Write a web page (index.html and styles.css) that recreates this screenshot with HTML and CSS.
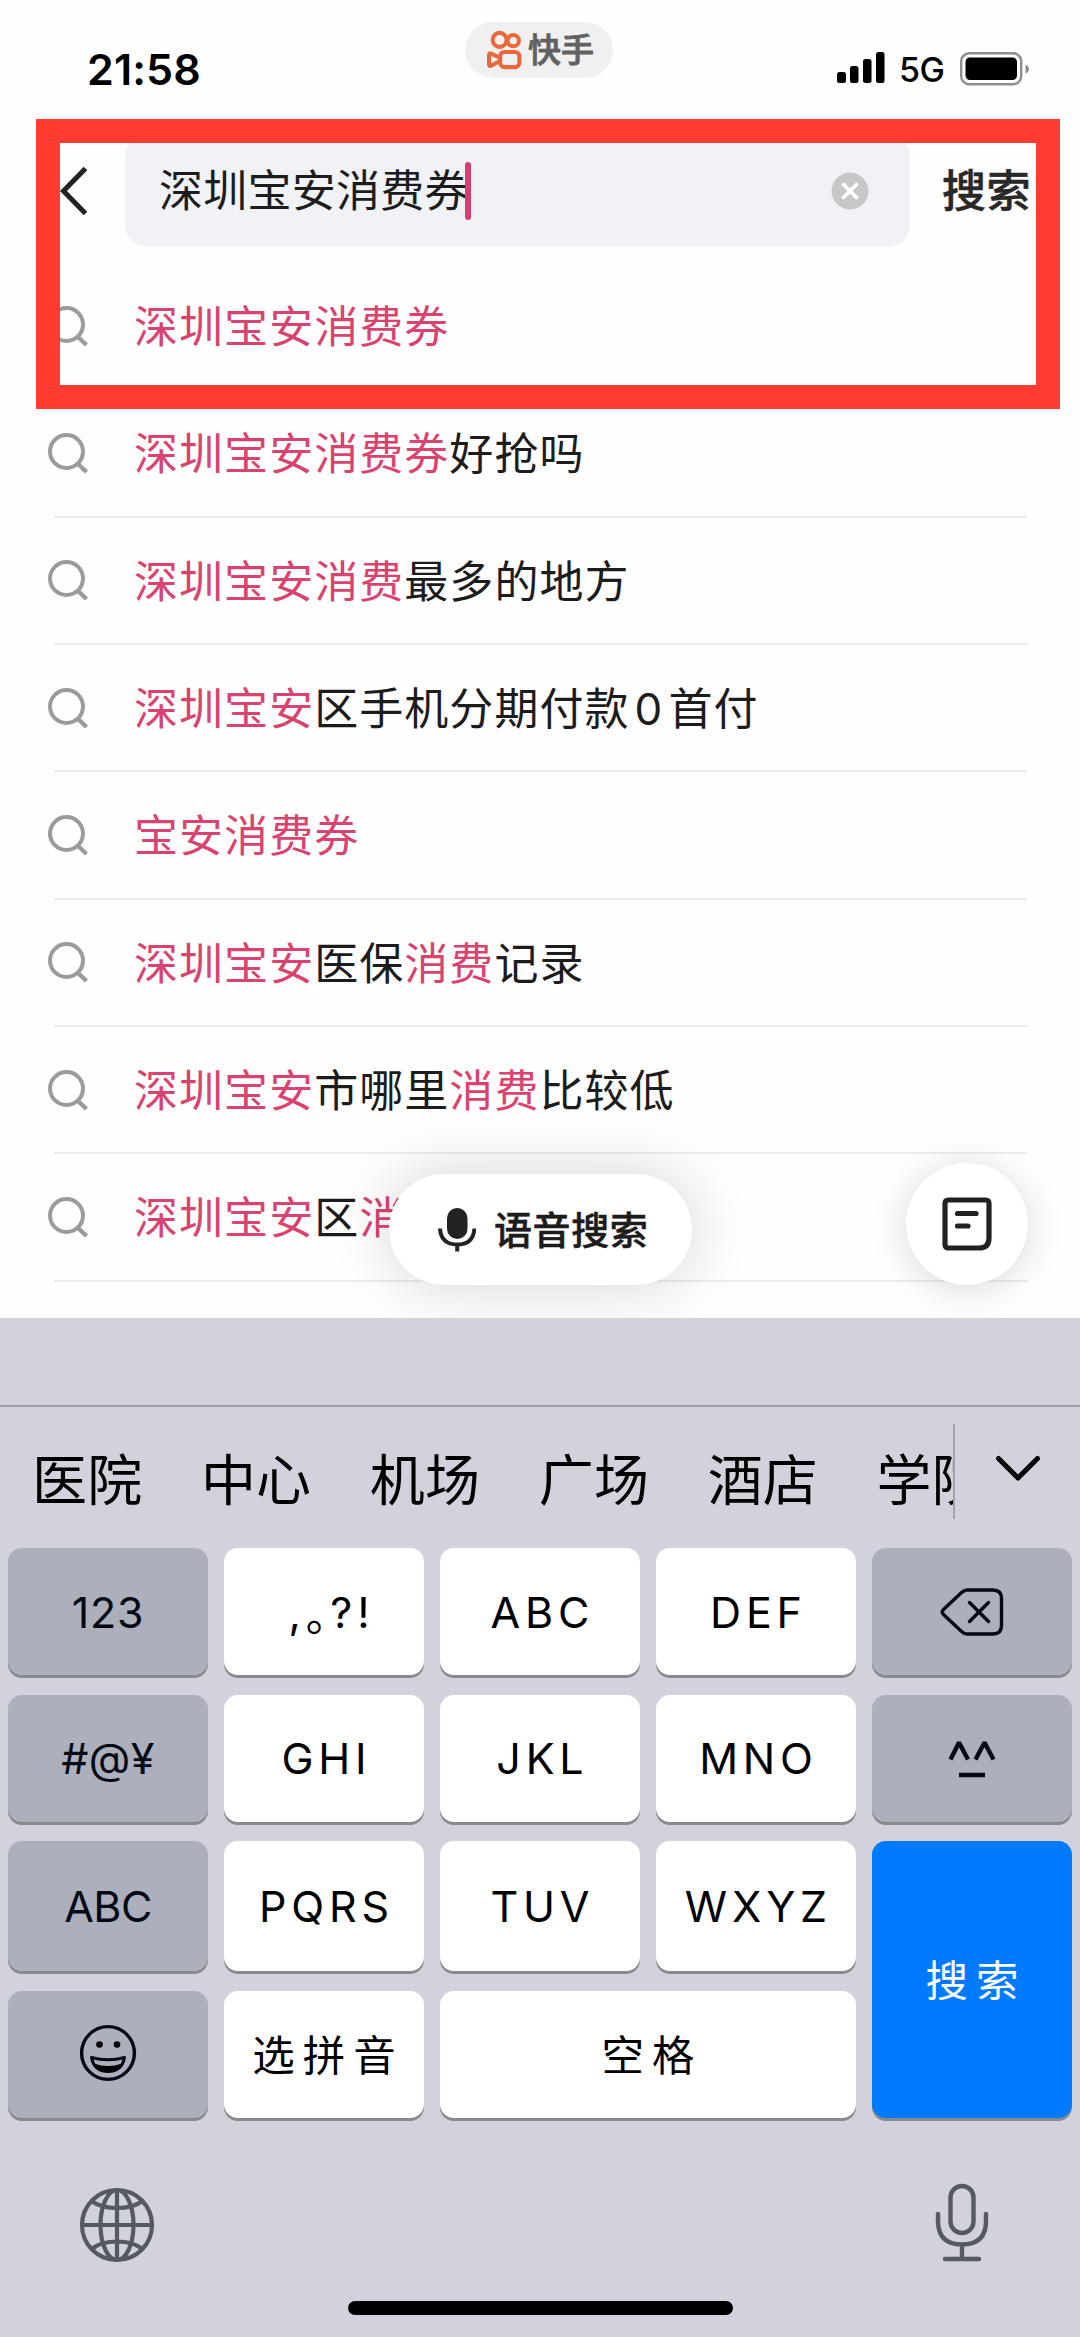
FILE: index.html
```html
<!DOCTYPE html>
<html lang="zh-CN">
<head>
<meta charset="utf-8">
<title>搜索</title>
<link rel="stylesheet" href="styles.css">
</head>
<body>
<svg class="defs" width="0" height="0" aria-hidden="true">
  <symbol id="magnifier" viewBox="0 0 44 44">
    <circle cx="20.5" cy="19.5" r="16.5" fill="none" stroke="#9b9b9b" stroke-width="4"/>
    <path d="M31.5 31.5 40.5 40" fill="none" stroke="#9b9b9b" stroke-width="4.4"/>
  </symbol>
</svg>
<div class="phone">
  <header class="status">
    <div class="time">21:58</div>
    <div class="source">
      <svg class="source-logo" viewBox="0 0 36 40" fill="none" stroke="#e8683c" stroke-width="4.2">
        <circle cx="13" cy="9.6" r="7.2"/>
        <circle cx="27" cy="10.4" r="5.8"/>
        <rect x="13.5" y="22" width="19.8" height="15.6" rx="4.6"/>
        <path d="M13 28 4.500 23.800Q2.1 22.800 2.1 25V34.6Q2.1 37 4.500 36L13 31.500" stroke-linejoin="round"/>
      </svg>
      <span>快手</span>
    </div>
    <div class="radio">
      <svg width="48" height="32" viewBox="0 0 48 32">
        <rect x="0" y="20" width="9" height="11" rx="2.5"/>
        <rect x="13" y="14" width="8.5" height="17" rx="2.5"/>
        <rect x="26" y="7" width="8.5" height="24" rx="2.5"/>
        <rect x="39" y="0" width="8.5" height="31" rx="2.5"/>
      </svg>
      <span class="network">5G</span>
      <svg width="70" height="34" viewBox="0 0 70 34">
        <rect x="1.2" y="1.2" width="60" height="31" rx="8" fill="none" stroke="#8f8f8f" stroke-width="2.4"/>
        <rect x="5.5" y="5.5" width="51.5" height="22.5" rx="4.5"/>
        <path d="M65.500 12.500Q69 14 69 17T65.500 21.500Z" fill="#8f8f8f"/>
      </svg>
    </div>
  </header>

  <div class="searchbar">
    <svg class="back" viewBox="0 0 30 52"><path d="M26.500 3.500 4.500 26 26.500 48.500" fill="none" stroke="#222" stroke-width="5"/></svg>
    <div class="field">
      <span class="query">深圳宝安消费券</span><i class="caret"></i>
      <svg class="clear" viewBox="0 0 38 38"><circle cx="19" cy="19" r="18.500" fill="#c7c7c9"/><path d="M12.500 12.500 25.500 25.500M25.500 12.500 12.500 25.500" stroke="#fff" stroke-width="3.800" stroke-linecap="round"/></svg>
    </div>
    <span class="submit">搜索</span>
  </div>

  <ul class="suggestions">
    <li><svg><use href="#magnifier"/></svg><p><b>深圳宝安消费券</b></p></li>
    <li><svg><use href="#magnifier"/></svg><p><b>深圳宝安消费券</b>好抢吗</p></li>
    <li><svg><use href="#magnifier"/></svg><p><b>深圳宝安消费</b>最多的地方</p></li>
    <li><svg><use href="#magnifier"/></svg><p><b>深圳宝安</b>区手机分期付款<span class="digit">0</span>首付</p></li>
    <li><svg><use href="#magnifier"/></svg><p><b>宝安消费券</b></p></li>
    <li><svg><use href="#magnifier"/></svg><p><b>深圳宝安</b>医保<b>消费</b>记录</p></li>
    <li><svg><use href="#magnifier"/></svg><p><b>深圳宝安</b>市哪里<b>消费</b>比较低</p></li>
    <li><svg><use href="#magnifier"/></svg><p><b>深圳宝安</b>区<b>消</b></p></li>
  </ul>

  <div class="voice">
    <svg viewBox="0 0 38 44"><rect x="9" y="0" width="20.500" height="31" rx="10.200" fill="#222"/><path d="M2 20.500Q3 36.500 19.200 36.500T36.400 20.500M19.200 36V43.500" fill="none" stroke="#222" stroke-width="4"/></svg>
    <span>语音搜索</span>
  </div>
  <div class="feedback">
    <svg viewBox="0 0 50 54"><path d="M6.500 3H43.500Q47 3 47 6.500V41Q47 51 37 51H6.500Q3 51 3 47.500V6.500Q3 3 6.500 3ZM15.500 16.500H34M15.500 29H26" fill="none" stroke="#222" stroke-width="5.200" stroke-linecap="round"/></svg>
  </div>
  <div class="highlight"></div>

  <section class="keyboard">
    <div class="toolbar"></div>
    <div class="candidates">
      <div class="words"><span>医院</span><span>中心</span><span>机场</span><span>广场</span><span>酒店</span><span>学院</span></div>
      <div class="expand"><svg viewBox="0 0 48 28"><path d="M4.500 3.500 24 23 43.500 3.500" fill="none" stroke="#000" stroke-width="5" stroke-linecap="round" stroke-linejoin="round"/></svg></div>
    </div>
    <div class="keys">
      <div class="key mod digits">123</div>
      <div class="key punct">,<span class="stop">。</span>?!</div>
      <div class="key">ABC</div>
      <div class="key">DEF</div>
      <div class="key mod">
        <svg width="64" height="48" viewBox="0 0 64 48" fill="none" stroke="#050914" stroke-width="3.400" stroke-linecap="round" stroke-linejoin="round"><path d="M27 2H53Q61.500 2 61.500 10.500V37.500Q61.500 46 53 46H27Q24 46 21 43L3.500 26.500Q1 24 3.500 21.500L21 5Q24 2 27 2ZM29.500 14.500 48.500 33.500M48.500 14.500 29.500 33.500"/></svg>
      </div>

      <div class="key mod symbols">#@¥</div>
      <div class="key">GHI</div>
      <div class="key">JKL</div>
      <div class="key">MNO</div>
      <div class="key mod">
        <svg class="face" width="48" height="40" viewBox="0 0 48 40" fill="none" stroke="#050914" stroke-width="4.400" stroke-linejoin="bevel"><path d="M2.500 20.500 11 3.500 20 20.500M27.500 20.500 36.500 3.500 45.500 20.500M11 36H37"/></svg>
      </div>

      <div class="key mod">ABC</div>
      <div class="key">PQRS</div>
      <div class="key">TUV</div>
      <div class="key">WXYZ</div>
      <div class="key go">搜索</div>

      <div class="key mod">
        <svg class="smile" width="58" height="58" viewBox="0 0 58 58"><circle cx="29" cy="29" r="26.400" fill="none" stroke="#050914" stroke-width="3.400"/><circle cx="20.500" cy="20.500" r="3.300"/><circle cx="38" cy="20.500" r="3.300"/><path d="M12.500 33.500Q29 38 45.500 33.500Q43 47.500 29 47.500T12.500 33.500Z" fill="none" stroke="#050914" stroke-width="3" stroke-linejoin="round"/><path d="M15 39.500Q29 44.500 43 39.500Q39 48 29 48T15 39.500Z"/></svg>
      </div>
      <div class="key cjk">选拼音</div>
      <div class="key cjk space">空格</div>
    </div>
    <div class="dock">
      <svg width="76" height="76" viewBox="0 0 76 76" fill="none" stroke="#555961" stroke-width="4.200"><circle cx="38" cy="38" r="35"/><ellipse cx="38" cy="38" rx="16.500" ry="35"/><path d="M38 3V73M3 38H73M12.500 14Q22 21 38 21T63.500 14M12.500 62Q22 54.500 38 54.500T63.500 62"/></svg>
      <svg class="dictate" width="54" height="80" viewBox="0 0 54 80" fill="none" stroke="#555961" stroke-width="4.400" stroke-linecap="round"><rect x="15.500" y="3" width="23" height="47" rx="11.500"/><path d="M3 31V38Q3 61.500 27 61.500T51 38V31M27 62V75M10 76H44"/></svg>
    </div>
    <div class="home"></div>
  </section>
</div>
</body>
</html>
```
FILE: styles.css
```css
* { box-sizing: border-box; }
body { margin: 0; background: #fff; }
.defs { position: absolute; }
svg { display: block; flex: none; }

.phone {
  position: relative;
  display: flex;
  flex-direction: column;
  width: 1080px;
  height: 2337px;
  overflow: hidden;
  background: #fefefe;
  color: #1c1c1c;
  font-family: Inter, "Noto Sans CJK SC", sans-serif;
}

/* status bar */
.status {
  display: grid;
  grid-template-columns: 465px 148px 1fr;
  height: 135px;
  flex: none;
  color: #000;
}
.time {
  padding: 43px 0 0 87px;
  font-size: 43px;
  line-height: 52px;
  font-weight: 600;
  letter-spacing: 0.1px;
}
.source {
  display: flex;
  align-items: center;
  gap: 6px;
  height: 56px;
  margin-top: 22px;
  padding-left: 22px;
  border-radius: 28px;
  background: #f0f0f0;
  color: #616161;
  font-size: 33px;
  line-height: 56px;
  font-weight: 500;
  -webkit-text-stroke: 0.8px currentColor;
}
.source-logo { width: 35px; height: 40px; }
.radio { display: flex; padding: 52px 0 0 224px; }
.network {
  width: 75px;
  padding-left: 14px;
  font-size: 34px;
  line-height: 36px;
  font-weight: 500;
  letter-spacing: -0.6px;
}

/* search bar */
.searchbar {
  display: flex;
  align-items: center;
  height: 112px;
  flex: none;
  padding-left: 59px;
}
.back { width: 30px; height: 52px; margin-right: 36px; }
.field {
  display: flex;
  align-items: center;
  width: 785px;
  height: 112px;
  padding: 0 41px 0 34px;
  border-radius: 22px;
  background: #f1f2f6;
}
.query { font-size: 44px; letter-spacing: 0.25px; line-height: 64px; }
.caret { width: 6px; height: 58px; margin-left: -4px; border-radius: 3px; background: #d83d70; }
.clear { width: 38px; height: 38px; margin-left: auto; }
.submit {
  margin: 0 0 0 32px;
  font-size: 44px;
  line-height: 64px;
  font-weight: 500;
  letter-spacing: 0.6px;
  color: #282828;
  -webkit-text-stroke: 0.5px currentColor;
}

/* suggestions */
.suggestions { list-style: none; margin: 0; padding: 16px 53px 0 54px; }
.suggestions li {
  display: flex;
  align-items: center;
  height: 127.33px;
  border-bottom: 2px solid #ebebeb;
}
.suggestions svg { width: 44px; height: 44px; margin: 2px 44px 0 -8px; }
.suggestions p {
  margin: 3px 0 0;
  font-size: 44px;
  line-height: 64px;
  letter-spacing: 1.05px;
  white-space: nowrap;
}
.suggestions b { font-weight: 400; color: #d8436f; }
.digit { padding: 0 5px; }

/* floating controls over the list */
.voice {
  position: absolute;
  left: 389px;
  top: 1174px;
  display: flex;
  align-items: center;
  gap: 18px;
  width: 303px;
  height: 111px;
  padding-left: 49px;
  border-radius: 56px;
  background: #fff;
  box-shadow: 0 0 60px rgba(0, 0, 0, .17);
  font-size: 38px;
  font-weight: 500;
  letter-spacing: 0.6px;
  -webkit-text-stroke: 0.5px currentColor;
}
.voice span { margin-top: -5px; }
.voice svg { width: 38px; height: 44px; }
.feedback {
  position: absolute;
  left: 906px;
  top: 1163px;
  display: grid;
  place-items: center;
  width: 122px;
  height: 122px;
  border-radius: 50%;
  background: #fff;
  box-shadow: 0 4px 36px rgba(0, 0, 0, .15);
}
.feedback svg { width: 50px; height: 54px; }
.highlight {
  position: absolute;
  left: 36px;
  top: 119px;
  width: 1024px;
  height: 290px;
  border: 24px solid #ff3b30;
}

/* keyboard */
.keyboard {
  position: relative;
  display: flex;
  flex-direction: column;
  height: 1019px;
  flex: none;
  margin-top: auto;
  background: #d1d2db;
  color: #050914;
}
.toolbar { height: 89px; border-bottom: 2px solid #9c9da5; }
.candidates { display: flex; height: 141px; }
.words {
  display: flex;
  gap: 58.5px;
  width: 955px;
  height: 95px;
  margin-top: 17px;
  padding-left: 32px;
  overflow: hidden;
  border-right: 2px solid #a3a4ab;
  color: #000;
  font-size: 55px;
  line-height: 113px;
  white-space: nowrap;
}
.words span { flex: none; letter-spacing: 0.2px; }
.expand { padding: 48px 0 0 39px; }
.expand svg { width: 48px; height: 28px; }

.keys {
  display: grid;
  grid-template-columns: repeat(5, 200px);
  grid-template-rows: 127px 127px 130px 127px;
  gap: 19.67px 16px;
  padding: 0 8px;
}
.key {
  display: flex;
  align-items: center;
  justify-content: center;
  border-radius: 14px;
  background: #fff;
  box-shadow: 0 3px 0 #88898d;
  color: #000;
  font-size: 43px;
  font-weight: 380;
  letter-spacing: 4.8px;
  text-indent: 4.8px;
}
.mod { background: #abb0bc; color: #050914; letter-spacing: -0.5px; text-indent: 0; }
.symbols { letter-spacing: 0.4px; }
.digits { letter-spacing: 0.8px; }
.cjk, .go { letter-spacing: 8px; text-indent: 8px; padding-bottom: 4px; font-size: 42.5px; }
.go { grid-row: 3 / 5; grid-column: 5; background: #007aff; color: #fff; }
.space { grid-column: 3 / 5; }
.punct { letter-spacing: 5px; text-indent: 0; padding-left: 15px; }
.stop { font-feature-settings: "halt"; letter-spacing: 3px; }
.face { margin-top: 2px; }
.smile { margin-top: -3px; }

.dock {
  display: flex;
  justify-content: space-between;
  padding: 69px 91px 0 79px;
}
.dictate { margin-top: -4px; }
.home {
  position: absolute;
  left: 348px;
  bottom: 22px;
  width: 385px;
  height: 14px;
  border-radius: 7px;
  background: #000;
}
```
